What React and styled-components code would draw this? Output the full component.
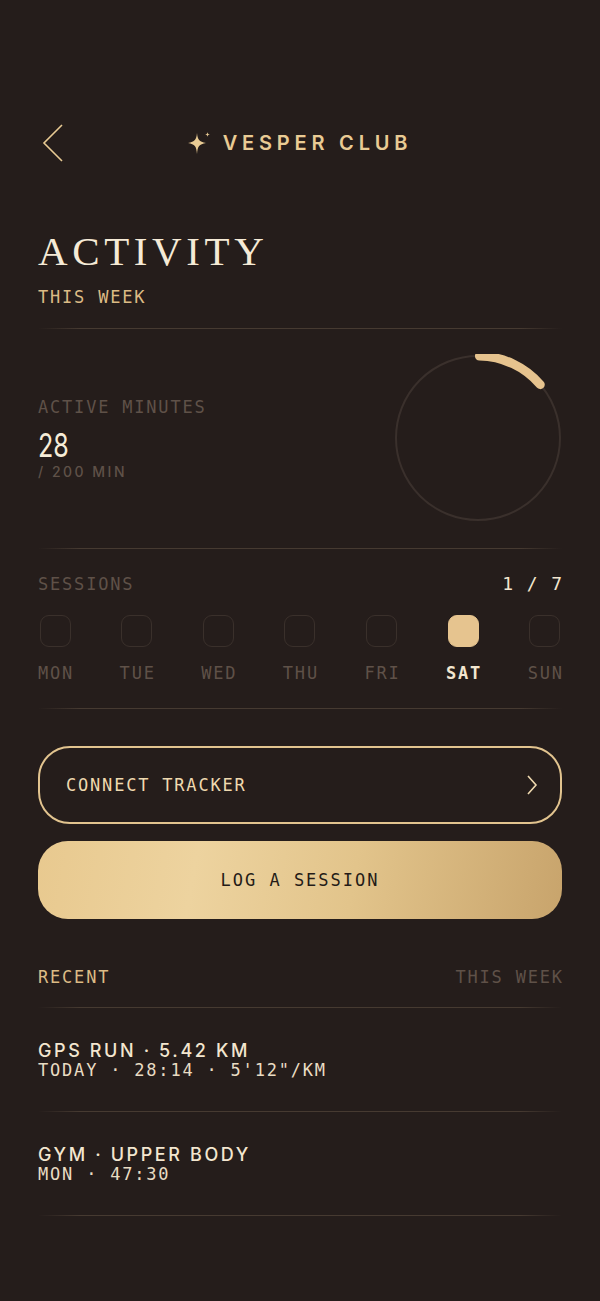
import React from "react"
import styled, { createGlobalStyle } from "styled-components"

const GlobalStyle = createGlobalStyle`
  html, body {
    margin: 0;
    padding: 0;
    background: #251d1b;
  }
  * {
    box-sizing: border-box;
  }
`

const mono = `"DejaVu Sans Mono", "Liberation Mono", monospace`
const sans = `Inter, "Noto Sans", sans-serif`

const Page = styled.div`
  width: 600px;
  min-height: 1301px;
  background: #251d1b;
  padding: 121px 38px 60px;
  color: #f3e6cf;
`

const Header = styled.header`
  display: grid;
  grid-template-columns: 1fr auto 1fr;
  align-items: center;
  height: 44px;
`

const BackButton = styled.button`
  background: none;
  border: none;
  padding: 0;
  width: 30px;
  height: 40px;
  display: flex;
  align-items: center;
  cursor: pointer;
  margin-left: 4px;
`

const Brand = styled.div`
  display: flex;
  align-items: center;
  gap: 11px;
  font-family: ${sans};
  font-weight: 600;
  font-size: 20px;
  letter-spacing: 4.8px;
  color: #e9cb94;
`

const Title = styled.h1`
  margin: 62px 0 0;
  font-family: "Liberation Serif", "DejaVu Serif", serif;
  font-weight: 400;
  font-size: 41px;
  line-height: 48px;
  letter-spacing: 4.6px;
  color: #f5ead6;
`

const Label = styled.div`
  font-family: ${mono};
  font-size: 17px;
  line-height: 20px;
  letter-spacing: 1.8px;
  color: ${({ tone }) =>
    tone === "gold" ? "#dcbb85" : tone === "cream" ? "#f3e6cf" : "#5f5148"};
  font-weight: ${({ strong }) => (strong ? 700 : 400)};
`

const EndLabel = styled(Label)`
  margin-right: -1.8px;
`

const SubTitle = styled(Label)`
  margin-top: 12px;
`

const Divider = styled.div`
  height: 1px;
  margin: ${({ space }) => space || "20px 0"};
  background: linear-gradient(
    90deg,
    rgba(90, 75, 60, 0) 0%,
    #463a31 8%,
    #463a31 92%,
    rgba(90, 75, 60, 0) 100%
  );
`

const MinutesRow = styled.section`
  display: flex;
  align-items: center;
  justify-content: space-between;
`

const MinutesText = styled.div`
  display: flex;
  flex-direction: column;
`

const BigNumber = styled.div`
  font-family: ${sans};
  font-size: 33px;
  line-height: 36px;
  margin-top: 10px;
  color: #f6ecd8;
  transform: scaleX(0.76);
  transform-origin: left center;
`

const Small = styled.div`
  font-family: ${sans};
  font-size: 14px;
  font-weight: 500;
  letter-spacing: 2.5px;
  color: #5f5148;
`

const HeadRow = styled.div`
  display: flex;
  justify-content: space-between;
  align-items: center;
  margin-top: ${({ top }) => top || 0}px;
`

const Count = styled.div`
  font-family: ${mono};
  font-size: 18px;
  letter-spacing: 1.4px;
  color: #f3e6cf;
  margin-right: -1.4px;
`

const Days = styled.div`
  display: flex;
  justify-content: space-between;
  margin-top: 21px;
`

const Day = styled.div`
  display: flex;
  flex-direction: column;
  align-items: center;
  gap: 16px;
`

const DayBox = styled.div`
  width: 31px;
  height: 32px;
  border-radius: 9px;
  border: 1.5px solid ${({ on }) => (on ? "#e6c48f" : "#3a302b")};
  background: ${({ on }) => (on ? "#e6c48f" : "transparent")};
`

const DayName = styled(Label)`
  margin-right: -1.8px;
`

const OutlineButton = styled.button`
  width: 100%;
  height: 78px;
  border-radius: 32px;
  border: 2px solid #e2c48f;
  background: transparent;
  display: flex;
  align-items: center;
  justify-content: space-between;
  padding: 0 22px 0 26px;
  font-family: ${mono};
  font-size: 17px;
  letter-spacing: 1.8px;
  color: #efd9af;
  cursor: pointer;
`

const GoldButton = styled.button`
  width: 100%;
  height: 78px;
  margin-top: 17px;
  border-radius: 30px;
  border: none;
  background: linear-gradient(
    100deg,
    #e8c98f 0%,
    #edd39f 30%,
    #e2c48b 60%,
    #c8a46c 100%
  );
  font-family: ${mono};
  font-size: 17px;
  letter-spacing: 2px;
  color: #241b17;
  cursor: pointer;
`

const ActivityItem = styled.div`
  display: flex;
  flex-direction: column;
  padding: 15px 0 14px;
`

const ItemTitle = styled.div`
  font-family: ${sans};
  font-size: 18px;
  font-weight: 500;
  line-height: 20px;
  letter-spacing: 2.6px;
  color: #f3e6cf;
`

const ItemMeta = styled(Label)`
  line-height: 18px;
  color: #e9dcc3;
`

const Sparkle = () => (
  <svg width="24" height="26" viewBox="0 0 24 26">
    <path
      d="M9 3 C9.7 10 11 11.6 18 13 C11 14.4 9.7 16 9 24 C8.3 16 7 14.4 0 13 C7 11.6 8.3 10 9 3 Z"
      fill="#e9cb94"
    />
    <path
      d="M19.5 2 C19.7 3.8 20 4.2 22 4.5 C20 4.8 19.7 5.2 19.5 7 C19.3 5.2 19 4.8 17 4.5 C19 4.2 19.3 3.8 19.5 2 Z"
      fill="#e9cb94"
    />
  </svg>
)

const Ring = ({ value, total }) => {
  const r = 82
  const c = 2 * Math.PI * r
  const pct = value / total
  return (
    <svg width="168" height="168" viewBox="0 0 168 168">
      <circle cx="84" cy="84" r={r} fill="none" stroke="#3a302c" strokeWidth="2" />
      <circle
        cx="84"
        cy="84"
        r={r}
        fill="none"
        stroke="#e6c38e"
        strokeWidth="9"
        strokeLinecap="round"
        strokeDasharray={`${c * pct - 3} ${c}`}
        transform="rotate(-89 84 84)"
      />
    </svg>
  )
}

const days = ["MON", "TUE", "WED", "THU", "FRI", "SAT", "SUN"]

const recent = [
  { title: "GPS RUN · 5.42 KM", meta: `TODAY · 28:14 · 5'12"/KM` },
  { title: "GYM · UPPER BODY", meta: "MON · 47:30" },
]

const App = () => (
  <Page>
    <GlobalStyle />
    <Header>
      <BackButton aria-label="Back">
        <svg width="22" height="38" viewBox="0 0 22 38">
          <path d="M20 1 L2 19 L20 37" fill="none" stroke="#e9cb94" strokeWidth="1.6" />
        </svg>
      </BackButton>
      <Brand>
        <Sparkle />
        VESPER CLUB
      </Brand>
      <div />
    </Header>

    <Title>ACTIVITY</Title>
    <SubTitle tone="gold">THIS WEEK</SubTitle>

    <Divider space="21px 0 25px" />

    <MinutesRow>
      <MinutesText>
        <Label>ACTIVE MINUTES</Label>
        <BigNumber>28</BigNumber>
        <Small>/ 200 MIN</Small>
      </MinutesText>
      <Ring value={28} total={200} />
    </MinutesRow>

    <Divider space="26px 0 24px" />

    <HeadRow>
      <Label>SESSIONS</Label>
      <Count>1 / 7</Count>
    </HeadRow>
    <Days>
      {days.map((d) => (
        <Day key={d}>
          <DayBox on={d === "SAT" ? 1 : 0} />
          <DayName tone={d === "SAT" ? "cream" : undefined} strong={d === "SAT"}>
            {d}
          </DayName>
        </Day>
      ))}
    </Days>

    <Divider space="25px 0 37px" />

    <OutlineButton>
      CONNECT TRACKER
      <svg width="12" height="20" viewBox="0 0 12 20">
        <path d="M2 1 L10 10 L2 19" fill="none" stroke="#efd9af" strokeWidth="1.6" />
      </svg>
    </OutlineButton>
    <GoldButton>LOG A SESSION</GoldButton>

    <HeadRow top={48}>
      <Label tone="gold">RECENT</Label>
      <EndLabel>THIS WEEK</EndLabel>
    </HeadRow>

    <Divider space="20px 0 18px" />

    {recent.map((item) => (
      <React.Fragment key={item.title}>
        <ActivityItem>
          <ItemTitle>{item.title}</ItemTitle>
          <ItemMeta>{item.meta}</ItemMeta>
        </ActivityItem>
        <Divider space="18px 0 18px" />
      </React.Fragment>
    ))}
  </Page>
)

export default App
